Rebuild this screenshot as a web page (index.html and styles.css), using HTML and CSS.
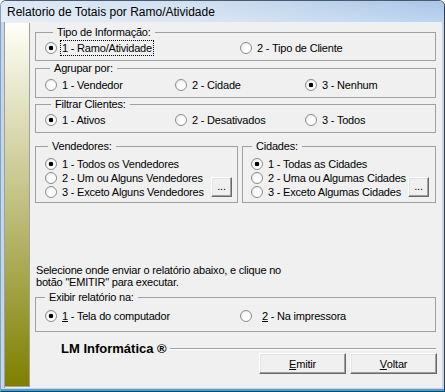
FILE: index.html
```html
<!DOCTYPE html>
<html lang="pt">
<head>
<meta charset="utf-8">
<title>Relatorio de Totais por Ramo/Atividade</title>
<link rel="stylesheet" href="styles.css">
</head>
<body>
<div class="window">
  <div class="titlebar">Relatorio de Totais por Ramo/Atividade</div>
  <div class="client">
    <div class="sidebar"></div>
    <div class="main">
      <fieldset class="group g1">
        <legend class="lg lg-tipo">Tipo de Informação:</legend>
        <div class="body cols-2">
          <span class="radio checked"><span class="dot"></span><span class="focus">1 - Ramo/Atividade</span></span>
          <span class="radio"><span class="dot"></span>2 - Tipo de Cliente</span>
        </div>
      </fieldset>

      <fieldset class="group g2">
        <legend class="lg lg-agrupar">Agrupar por:</legend>
        <div class="body cols-3">
          <span class="radio"><span class="dot"></span>1 - Vendedor</span>
          <span class="radio"><span class="dot"></span>2 - Cidade</span>
          <span class="radio checked"><span class="dot"></span>3 - Nenhum</span>
        </div>
      </fieldset>

      <fieldset class="group g3">
        <legend class="lg lg-filtrar">Filtrar Clientes:</legend>
        <div class="body cols-3">
          <span class="radio checked"><span class="dot"></span>1 - Ativos</span>
          <span class="radio"><span class="dot"></span>2 - Desativados</span>
          <span class="radio"><span class="dot"></span>3 - Todos</span>
        </div>
      </fieldset>

      <div class="pair">
        <fieldset class="group g4">
          <legend class="lg lg-vend">Vendedores:</legend>
          <div class="body list vend">
            <div class="rows">
              <span class="radio checked"><span class="dot"></span>1 - Todos os Vendedores</span>
              <span class="radio"><span class="dot"></span>2 - Um ou Alguns Vendedores</span>
              <span class="radio"><span class="dot"></span>3 - Exceto Alguns Vendedores</span>
            </div>
            <span class="btn small">...</span>
          </div>
        </fieldset>
        <fieldset class="group g4">
          <legend class="lg lg-cid">Cidades:</legend>
          <div class="body list cid">
            <div class="rows">
              <span class="radio checked"><span class="dot"></span>1 - Todas as Cidades</span>
              <span class="radio"><span class="dot"></span>2 - Uma ou Algumas Cidades</span>
              <span class="radio"><span class="dot"></span>3 - Exceto Algumas Cidades</span>
            </div>
            <span class="btn small">...</span>
          </div>
        </fieldset>
      </div>

      <p class="hint">Selecione onde enviar o relatório abaixo, e clique no<br>botão "EMITIR" para executar.</p>

      <fieldset class="group g5">
        <legend class="lg lg-exibir">Exibir relatório na:</legend>
        <div class="body cols-2">
          <span class="radio checked"><span class="dot"></span><span><u>1</u> - Tela do computador</span></span>
          <span class="radio wide"><span class="dot"></span><span><u>2</u> - Na impressora</span></span>
        </div>
      </fieldset>

      <div class="brand">
        <span class="brand-name">LM Informática ®</span>
        <span class="rule"></span>
      </div>
      <div class="actions">
        <span class="btn big"><u>E</u>mitir</span>
        <span class="btn big"><u>V</u>oltar</span>
      </div>
    </div>
  </div>
</div>
</body>
</html>
```

FILE: styles.css
```css
* { box-sizing: border-box; }
html, body { margin: 0; padding: 0; }
body {
  width: 445px;
  height: 392px;
  overflow: hidden;
  background: #ffffff;
  font-family: "Liberation Sans", Arial, sans-serif;
  font-size: 11px;
  letter-spacing: -0.2px;
  color: #000;
}

.window {
  width: 445px;
  height: 392px;
  display: flex;
  flex-direction: column;
  background: #c3d7ec;
  border: 1px solid;
  border-color: #4b5b6f #2c3b4d #2c3b4d #8aa0b8;
  border-radius: 6px 6px 0 0;
  padding: 0 2px 3px 3px;
  box-shadow: inset 0 -2px 0 #3fa6dc;
}

.titlebar {
  height: 21px;
  margin: 0 -2px 0 -3px;
  padding: 2px 0 0 6px;
  line-height: 19px;
  font-size: 12px;
  letter-spacing: 0;
  color: #000;
  border-radius: 5px 5px 0 0;
  background:
    linear-gradient(to bottom, rgba(255,255,255,0.0), rgba(255,255,255,0.25)),
    linear-gradient(to right, #dfe8f4 0%, #cfdeef 45%, #a9c6e8 100%);
}

.client {
  flex: 1;
  display: flex;
  background: #f0f0f0;
  box-shadow: inset 1px 0 0 #a0a0a0;
}

.sidebar {
  width: 26px;
  margin: 1px 0 1px 1px;
  border-right: 1px solid #a0a0a0;
  border-bottom: 1px solid #a0a0a0;
  background: linear-gradient(to bottom, #fffff8 0%, #c0c080 50%, #7f7f00 100%);
}

.main {
  flex: 1;
  padding: 4px 6px 0 5px;
  display: flex;
  flex-direction: column;
}

.group {
  margin: 0;
  padding: 0;
  min-width: 0;
  border: 1px solid #a0a0a0;
}

.lg {
  padding: 0 4px;
  line-height: 13px;
  height: 13px;
}
.lg-tipo { margin-left: 17px; }
.lg-agrupar { margin-left: 14px; }
.lg-filtrar { margin-left: 15px; }
.lg-vend { margin-left: 12px; }
.lg-cid { margin-left: 9px; }
.lg-exibir { margin-left: 9px; }

.body { padding: 2px 0 5px 9px; }
.g2 .body { padding-top: 3px; }
.g5 .body { padding-top: 5px; padding-bottom: 8px; }

.cols-2 { display: grid; grid-template-columns: 195px 1fr; }
.cols-3 { display: grid; grid-template-columns: 130px 130px 1fr; }

.radio {
  display: flex;
  align-items: center;
  gap: 5px;
  height: 14px;
  line-height: 14px;
  white-space: nowrap;
}
.radio.wide { gap: 10px; }

.dot {
  flex: none;
  width: 12px;
  height: 12px;
  border-radius: 50%;
  border: 1px solid #8b8b8b;
  background: radial-gradient(circle at 65% 65%, #ffffff 0 35%, #e3e3e3 100%);
}
.checked .dot {
  background:
    radial-gradient(circle at 50% 50%, #000 0 2px, transparent 2.6px),
    radial-gradient(circle at 65% 65%, #ffffff 0 35%, #e3e3e3 100%);
}

.focus {
  outline: 1px dotted #000;
  padding: 0 1px;
  margin-left: -1px;
  line-height: 14px;
}

u { text-decoration: underline; text-underline-offset: 1px; }

.g1 { margin-top: 0; }
.g2 { margin-top: 1px; }
.g3 { margin-top: 0; }

.pair {
  margin-top: 7px;
  display: grid;
  grid-template-columns: 203px 194px;
  column-gap: 4px;
}

.list {
  display: flex;
  padding: 4px 5px 3px 9px;
}
.list.cid { padding-left: 8px; padding-right: 6px; }
.rows { flex: 1; display: flex; flex-direction: column; }

.btn {
  display: flex;
  align-items: center;
  justify-content: center;
  background: #f0f0f0;
  border: 1px solid;
  border-color: #ffffff #696969 #696969 #ffffff;
  box-shadow: inset -1px -1px 0 #a0a0a0, inset 1px 1px 0 #e3e3e3;
  color: #000;
}
.btn.small {
  align-self: flex-end;
  width: 21px;
  height: 20px;
  margin-bottom: 2px;
  line-height: 12px;
  padding-bottom: 3px;
}
.btn.big {
  width: 87px;
  height: 21px;
}

.hint {
  margin: 61px 0 0 1px;
  line-height: 12px;
}

.g5 { margin-top: 3px; }

.brand {
  margin-top: 11px;
  display: flex;
  align-items: center;
  height: 12px;
  padding-left: 26px;
}
.brand-name {
  font-weight: bold;
  font-size: 13px;
  letter-spacing: 0;
  line-height: 12px;
  white-space: nowrap;
}
.rule {
  flex: 1;
  height: 2px;
  margin-left: 3px;
  border-top: 1px solid #a0a0a0;
  border-bottom: 1px solid #ffffff;
}

.actions {
  margin-top: -2px;
  display: flex;
  justify-content: flex-end;
  gap: 4px;
  margin-right: -1px;
}
```
